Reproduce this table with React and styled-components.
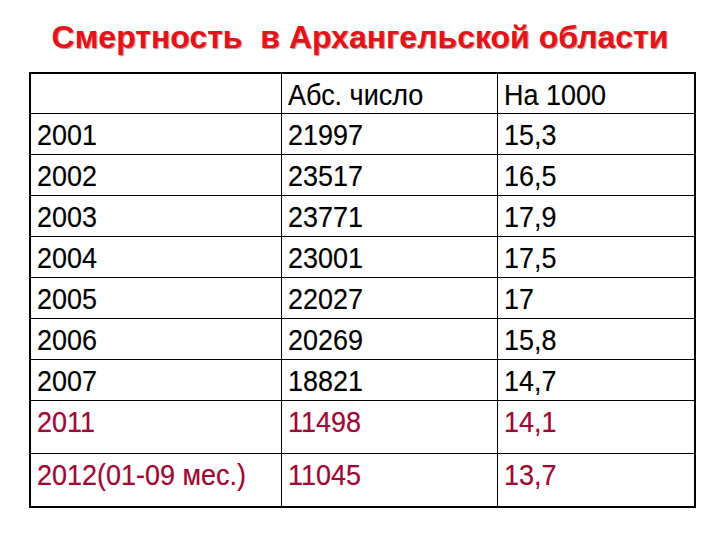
import React from 'react'
import styled, { createGlobalStyle } from 'styled-components'

const GlobalStyle = createGlobalStyle`
  html, body {
    margin: 0;
    padding: 0;
    background: #ffffff;
  }
  body {
    font-family: "Liberation Sans", Arial, sans-serif;
  }
`

const Slide = styled.div`
  width: 720px;
  height: 540px;
  background: #ffffff;
  display: flex;
  flex-direction: column;
  align-items: center;
  overflow: hidden;
`

const Title = styled.h1`
  margin: 18px 0 0 0;
  font-size: 32px;
  line-height: 38px;
  font-weight: bold;
  color: #e3121b;
  text-shadow: 1px 1px 1px rgba(120, 0, 0, 0.45);
  white-space: pre;
`

const Table = styled.table`
  margin: 16px 0 0 5px;
  border-collapse: collapse;
  border: 2.5px solid #000;
  font-size: 29px;
`

const Cell = styled.td`
  width: ${p => p.$w}px;
  height: ${p => p.$h}px;
  border: 1px solid #000;
  padding: 3px 0 0 6px;
  vertical-align: top;
  line-height: 36px;
  box-sizing: border-box;
  white-space: nowrap;
  color: ${p => (p.$red ? '#9a0a33' : '#000')};
  text-shadow: ${p => (p.$red ? '0 0 1px rgba(220, 60, 120, 0.5)' : '0 0 1px rgba(0, 0, 0, 0.25)')};
`

const Narrow = styled.span`
  display: inline-block;
  transform: scaleX(0.93);
  transform-origin: left center;
`

const widths = [251, 216, 198]

const rows = [
  { cells: ['', 'Абс. число', 'На 1000'], h: 40 },
  { cells: ['2001', '21997', '15,3'], h: 41 },
  { cells: ['2002', '23517', '16,5'], h: 41 },
  { cells: ['2003', '23771', '17,9'], h: 41 },
  { cells: ['2004', '23001', '17,5'], h: 41 },
  { cells: ['2005', '22027', '17'], h: 41 },
  { cells: ['2006', '20269', '15,8'], h: 41 },
  { cells: ['2007', '18821', '14,7'], h: 41 },
  { cells: ['2011', '11498', '14,1'], h: 53, red: true },
  { cells: ['2012(01-09 мес.)', '11045', '13,7'], h: 53, red: true },
]

export default function App() {
  return (
    <>
      <GlobalStyle />
      <Slide>
        <Title>{'Смертность  в Архангельской области'}</Title>
        <Table>
          <tbody>
            {rows.map((row, i) => (
              <tr key={i}>
                {row.cells.map((c, j) => (
                  <Cell key={j} $w={widths[j]} $h={row.h} $red={row.red}>
                    {c && <Narrow>{c}</Narrow>}
                  </Cell>
                ))}
              </tr>
            ))}
          </tbody>
        </Table>
      </Slide>
    </>
  )
}
